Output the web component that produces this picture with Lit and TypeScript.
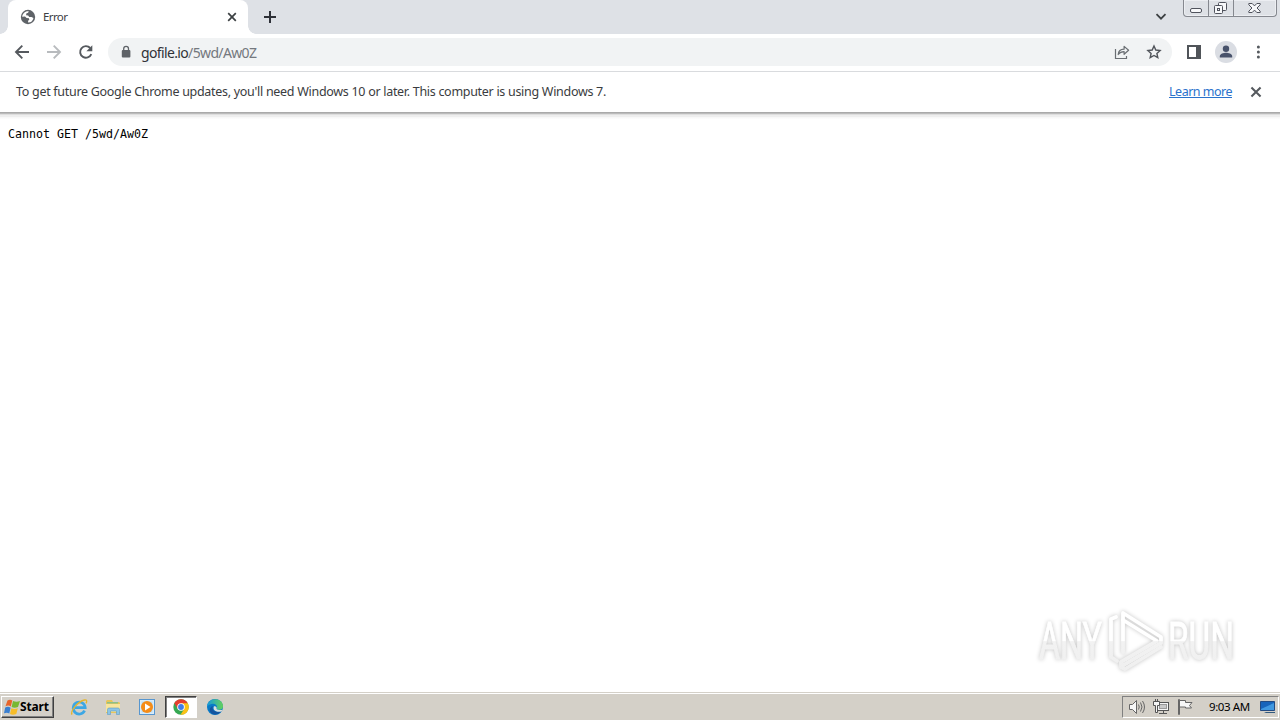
import { LitElement, html, css, svg, TemplateResult } from "lit";
import { customElement, property } from "lit/decorators.js";

const close = svg`<path d="M1.2 1.2l7.6 7.6M8.8 1.2l-7.6 7.6" fill="none" stroke="currentColor" stroke-width="1.7" />`;

@customElement("browser-tabs")
export class BrowserTabs extends LitElement {
  @property() label = "";

  static styles = css`
    :host {
      display: flex;
      height: 34px;
      background: #dee1e6;
      color: #3c4043;
      padding-left: 8px;
    }
    .tab {
      position: relative;
      display: flex;
      align-items: center;
      box-sizing: border-box;
      width: 240px;
      padding: 0 11px 0 12px;
      background: #fff;
      border-radius: 8px 8px 0 0;
    }
    .tab::before,
    .tab::after {
      content: "";
      position: absolute;
      bottom: 0;
      width: 8px;
      height: 8px;
    }
    .tab::before {
      left: -8px;
      background: radial-gradient(circle at 0 0, transparent 7.5px, #fff 8px);
    }
    .tab::after {
      right: -8px;
      background: radial-gradient(circle at 100% 0, transparent 7.5px, #fff 8px);
    }
    .title {
      flex: 1;
      margin-left: 7px;
      padding-bottom: 2px;
      font: 11.5px "Noto Sans", sans-serif;
      letter-spacing: -0.6px;
    }
    .plus {
      margin: 11px 0 0 16px;
    }
    .chevron {
      margin: 13px 16px 0 auto;
    }
    .controls {
      display: flex;
      box-sizing: border-box;
      width: 94px;
      height: 17px;
      margin-right: 3px;
      border: 1px solid #85888f;
      border-top: 0;
      border-radius: 0 0 4px 4px;
      box-shadow: inset 0 0 0 1px #eceef2;
    }
    .controls svg {
      display: block;
    }
  `;

  protected render(): TemplateResult {
    return html`
      <div class="tab">
        <svg width="16" height="16" viewBox="0 0 16 16">
          <circle cx="8" cy="8" r="7.2" fill="#5f6368" />
          <path
            d="M8.8 2.2l-.7 1.6-1.8.8-.2 1.7 2 .3 1.2 1.5 2.2-.2 1.9 1c-.1 1.8-1.5 3.7-3.3 4.4l-2 .3v-1.8l1.2-1-.4-1.6-2.3-.3-1.6-1.4-2.8.2c.1-2.3 2.3-5 5-5.4z"
            fill="#fff"
          />
        </svg>
        <span class="title">${this.label}</span>
        <svg width="10" height="10" viewBox="0 0 10 10">${close}</svg>
      </div>
      <svg class="plus" width="12" height="12" viewBox="0 0 12 12">
        <path d="M6 0v12M0 6h12" stroke="#2e3138" stroke-width="2" />
      </svg>
      <svg class="chevron" width="12" height="8" viewBox="0 0 12 8">
        <path d="M1.5 1.2L6 5.7l4.5-4.5" fill="none" stroke="#3c4043" stroke-width="1.8" />
      </svg>
      <div class="controls">
        <svg width="92" height="16" viewBox="0 0 92 16" fill="#f7f8fa" stroke="#50535d">
          <path d="M24.5 0v16M49.5 0v16" stroke="#85888f" />
          <rect x="6.5" y="8.5" width="11" height="4" rx="1.5" />
          <rect x="34.5" y="2.5" width="8" height="8" rx="1" />
          <rect x="30.5" y="5.5" width="8" height="8" rx="1" />
          <rect x="33.5" y="8.5" width="2" height="2" />
          <path d="M64.8 3.5h3.4l2.3 2.4 2.3-2.4h3.4v1.3L73 8l3.2 3.2v1.3h-3.4l-2.3-2.4-2.3 2.4h-3.4v-1.3L68 8l-3.2-3.2z" />
        </svg>
      </div>
    `;
  }
}

@customElement("browser-toolbar")
export class BrowserToolbar extends LitElement {
  @property() host = "";
  @property() path = "";

  static styles = css`
    :host {
      display: flex;
      align-items: center;
      box-sizing: border-box;
      height: 38px;
      padding: 0 14px 1px;
      background: #fff;
      border-bottom: 1px solid #d9dbde;
    }
    svg {
      flex: none;
    }
    .nav {
      display: flex;
      gap: 16px;
      width: 94px;
    }
    .omnibox {
      display: flex;
      flex: 1;
      align-items: center;
      box-sizing: border-box;
      height: 28px;
      padding: 0 10px 0 12px;
      border-radius: 14px;
      background: #f1f3f4;
    }
    .url {
      flex: 1;
      margin-left: 9px;
      padding-top: 1px;
      font: 14px "Noto Sans", sans-serif;
      letter-spacing: -0.64px;
      color: #303236;
    }
    .path {
      color: #74787e;
    }
    .share {
      margin-right: 16px;
    }
    .panel {
      margin: 0 14px 0 15px;
    }
    .menu {
      margin-left: 19px;
      margin-right: 6px;
    }
  `;

  protected render(): TemplateResult {
    return html`
      <div class="nav">
        <svg width="16" height="16" viewBox="0 0 16 16" fill="none" stroke="#55595e" stroke-width="1.9">
          <path d="M15 8H2M8.3 1.7L2 8l6.3 6.3" />
        </svg>
        <svg width="16" height="16" viewBox="0 0 16 16" fill="none" stroke="#b8bbbe" stroke-width="1.9">
          <path d="M1 8h13M7.7 1.7L14 8l-6.3 6.3" />
        </svg>
        <svg width="16" height="16" viewBox="0 0 16 16">
          <path d="M13.3 10.2A5.8 5.8 0 1 1 12.2 4" fill="none" stroke="#55595e" stroke-width="1.9" />
          <path d="M14.3 1.2v6H8.4z" fill="#55595e" />
        </svg>
      </div>
      <div class="omnibox">
        <svg width="12" height="14" viewBox="0 0 12 14">
          <rect x="1.8" y="5" width="8.6" height="7.6" rx="1" fill="#5f6368" />
          <path d="M3.7 5.5V3.8a2.400 2.400 0 0 1 4.800 0v1.700" fill="none" stroke="#5f6368" stroke-width="1.3" />
        </svg>
        <span class="url">${this.host}<span class="path">${this.path}</span></span>
        <svg class="share" width="16" height="16" viewBox="0 0 16 16" fill="none" stroke="#6a6e73" stroke-width="1.2">
          <path d="M1.5 5v9.5h11V12" />
          <path d="M4.2 10.500c.3-3.600 2.400-5.200 5.900-5.300V2.400L14.600 6.300l-4.500 4V7.600c-2.700 0-4.400.8-5.900 2.900z" stroke-linejoin="round" />
        </svg>
        <svg width="16" height="16" viewBox="0 0 16 16">
          <path d="M8 2l1.800 4 4.300.5-3.200 2.900.9 4.300L8 11.500l-3.800 2.200.9-4.300-3.200-2.900L6.200 6z" fill="none" stroke="#50545a" stroke-width="1.4" />
        </svg>
      </div>
      <svg class="panel" width="14" height="14" viewBox="0 0 14 14">
        <path d="M0 0h14v14H0zM2 2v10h7V2z" fill="#505459" fill-rule="evenodd" />
      </svg>
      <svg width="22" height="22" viewBox="0 0 22 22">
        <circle cx="11" cy="11" r="11" fill="#dadde3" />
        <circle cx="11" cy="7.8" r="3.2" fill="#48526b" />
        <path d="M4.800 16.500v-1.400c0-2.300 3.900-3.400 6.200-3.400s6.200 1.100 6.200 3.400v1.400z" fill="#48526b" />
      </svg>
      <svg class="menu" width="4" height="16" viewBox="0 0 4 16" fill="#55595e">
        <circle cx="2.400" cy="3" r="1.500" />
        <circle cx="2.400" cy="8" r="1.500" />
        <circle cx="2.400" cy="13" r="1.500" />
      </svg>
    `;
  }
}

@customElement("info-bar")
export class InfoBar extends LitElement {
  static styles = css`
    :host {
      display: flex;
      align-items: center;
      box-sizing: border-box;
      height: 40px;
      padding: 0 18px 1px 16px;
      font: 12.5px "Noto Sans", sans-serif;
      color: #3a3c40;
    }
    .message {
      flex: 1;
      letter-spacing: -0.294px;
      white-space: nowrap;
    }
    .link {
      margin-right: 18px;
      letter-spacing: -0.5px;
      color: #2a72cc;
      text-decoration: underline;
    }
    svg {
      color: #55595e;
    }
  `;

  protected render(): TemplateResult {
    return html`
      <span class="message"
        >To get future Google Chrome updates, you'll need Windows 10 or later. This computer is using Windows 7.</span
      >
      <a class="link">Learn more</a>
      <svg width="12" height="12" viewBox="0 0 10 10">${close}</svg>
    `;
  }
}

@customElement("any-run-mark")
export class AnyRunMark extends LitElement {
  static styles = css`
    :host {
      display: block;
    }
    svg {
      display: block;
      filter: drop-shadow(0 0 2px rgba(0, 0, 0, 0.24));
    }
    .word {
      font: 400 51px Roboto, sans-serif;
    }
  `;

  protected render(): TemplateResult {
    return html`
      <svg width="220" height="80" viewBox="0 0 220 80">
        <defs>
          <linearGradient id="fade" x1="0" y1="0" x2="0" y2="80" gradientUnits="userSpaceOnUse">
            <stop offset="0.51" stop-color="#fff" />
            <stop offset="0.52" stop-color="#f2f2f2" />
            <stop offset="0.9" stop-color="#efefef" />
          </linearGradient>
        </defs>
        <g fill="url(#fade)" stroke="url(#fade)" stroke-width="0.8">
          <text class="word" x="9" y="59" textLength="63" lengthAdjust="spacingAndGlyphs">ANY</text>
          <text class="word" x="138" y="59" textLength="66" lengthAdjust="spacingAndGlyphs">RUN</text>
        </g>
        <g fill="none" stroke="url(#fade)" stroke-width="3.8" stroke-linejoin="round" stroke-linecap="round">
          <path d="M86 17l-5 2v38l6 4" />
          <path d="M93 52V13l38 24v6L92 66" />
          <path d="M93 20l34 21-36 21v5l4 2 36-22" />
        </g>
      </svg>
    `;
  }
}

@customElement("task-bar")
export class TaskBar extends LitElement {
  @property() time = "";

  static styles = css`
    :host {
      display: flex;
      align-items: flex-start;
      box-sizing: border-box;
      height: 28px;
      padding: 3px 1px 0;
      background: #d4d0c8;
      border-top: 1px solid #d4d0c8;
      box-shadow: inset 0 1px #fff;
    }
    svg {
      display: block;
      flex: none;
    }
    .start {
      display: flex;
      align-items: center;
      box-sizing: border-box;
      width: 53px;
      height: 22px;
      padding: 0 0 1px 2px;
      border: 1px solid;
      border-color: #fff #404040 #404040 #fff;
      box-shadow: inset -1px -1px #808080;
      font: bold 12px "Noto Sans", sans-serif;
      letter-spacing: -0.15px;
      color: #000;
    }
    .launch {
      display: flex;
      margin-left: 9px;
    }
    .item {
      display: flex;
      align-items: center;
      justify-content: center;
      box-sizing: border-box;
      width: 32px;
      height: 22px;
      margin-right: 2px;
      border: 1px solid transparent;
    }
    .active {
      background: #fff;
      border-color: #404040 #fff #fff #404040;
      box-shadow: inset 1px 1px #808080;
    }
    .tray {
      display: flex;
      align-items: center;
      box-sizing: border-box;
      width: 157px;
      height: 22px;
      margin-left: auto;
      padding: 0 2px 0 5px;
      border: 1px solid;
      border-color: #808080 #fff #fff #808080;
      gap: 8px;
    }
    .clock {
      flex: 1;
      margin-left: 8px;
      padding-bottom: 1px;
      font: 11.5px "Noto Sans", sans-serif;
      letter-spacing: -0.4px;
      white-space: nowrap;
      color: #000;
    }
  `;

  protected render(): TemplateResult {
    return html`
      <div class="start">
        <svg width="16" height="16" viewBox="0 0 16 16">
          <path d="M3.500 1.500Q6 0 8.300 1.500L6.800 7.500Q4.500 5.800 1.500 7.300z" fill="#e8642a" />
          <path d="M9 2q3.500 1.500 7 0L14 8q-3.500 1.500-6.400 0z" fill="#78b832" />
          <path d="M1.200 8.500q3-1.500 5.400.2L5.300 14.500Q3 13 0 14.300z" fill="#3a7fd0" />
          <path d="M7.400 9.200q3 1.300 6.400.1L12.300 15q-3.500 1.500-6.300 0z" fill="#f7bd28" />
        </svg>
        <span>Start</span>
      </div>
      <div class="launch">
        <span class="item">
          <svg width="18" height="18" viewBox="0 0 18 18" fill="none">
            <path d="M14.600 12.700A6 6 0 1 1 15.200 9.600H5" stroke="#3da7e4" stroke-width="2.700" />
            <path d="M2.200 16.500C-.8 14 8 3.400 14.500 2c3-.5 2.300 2 1.500 3.300" stroke="#e5b52c" stroke-width="1.300" />
          </svg>
        </span>
        <span class="item">
          <svg width="18" height="18" viewBox="0 0 18 18">
            <path d="M2 3l1-1h5l1 2h6l1 1v10H2z" fill="#e7c65a" />
            <path d="M3 4h11v1.500H3z" fill="#8cc08a" />
            <path d="M2 6h14v8H2z" fill="#f8e59c" />
            <path d="M3.500 16.500v-5q0-1.500 1.500-1.500h9q1.500 0 1.500 1.500v5h-3v-3.500h-6v3.500z" fill="#8cc4e6" stroke="#5c9cc4" stroke-width=".6" />
          </svg>
        </span>
        <span class="item">
          <svg width="18" height="18" viewBox="0 0 18 18">
            <rect x="1.500" y="1.500" width="15" height="15" fill="#d8ecfa" stroke="#5796cf" />
            <rect x="3.500" y="3.500" width="11" height="11" fill="#b5dbf5" />
            <circle cx="9" cy="9" r="6" fill="#f58c18" />
            <path d="M7 5.500v7L12.500 9z" fill="#fff" />
          </svg>
        </span>
        <span class="item active">
          <svg width="16" height="16" viewBox="0 0 16 16">
            <circle cx="8" cy="8" r="7.700" fill="#35a852" />
            <path d="M8 8L1.300 4.100A7.700 7.700 0 0 1 14.700 4.100z" fill="#e43e2f" />
            <path d="M8 4.300h6.800A7.700 7.700 0 0 1 7.500 15.700L11.200 9.900z" fill="#fbc116" />
            <path d="M1.300 4.100L4.800 9.900 8 8 8 4z" fill="#e43e2f" />
            <circle cx="8" cy="8" r="3.800" fill="#fff" />
            <circle cx="8" cy="8" r="2.900" fill="#3f7de8" />
          </svg>
        </span>
        <span class="item">
          <svg width="18" height="18" viewBox="0 0 18 18">
            <defs>
              <linearGradient id="edge">
                <stop offset="0" stop-color="#1599dc" />
                <stop offset="1" stop-color="#65d25a" />
              </linearGradient>
            </defs>
            <circle cx="9" cy="9" r="8" fill="#087ac7" />
            <path d="M1 8.500C2-1.500 16.800-.8 17 8.200c0 3.700-4.500 4.400-6.500 2.900C13 6 6 3.500 1 8.500z" fill="url(#edge)" />
            <path d="M7 8c-2 4 2.500 7.300 8.500 5C11 19.500 2 16 4 10.500Q5 8 7 8z" fill="#15549f" />
            <path d="M8 8.200q3.300-.4 2.500 2.900 2 1.500 6 .6l-1 1.800C9 14.500 6.500 11.500 8 8.200z" fill="#d9dfdf" />
          </svg>
        </span>
      </div>
      <div class="tray">
        <svg width="17" height="16" viewBox="0 0 17 16" fill="none" stroke="#666">
          <path d="M1.500 5.500h3l4-4v13l-4-4h-3z" fill="#f7f7f7" />
          <path d="M10.500 5.500q1.500 2.500 0 5M12.500 3.500q3 4.500 0 9M14.500 2q4 6 0 12" />
        </svg>
        <svg width="16" height="16" viewBox="0 0 16 16" fill="#f5f5f5" stroke="#555">
          <rect x="4.500" y="3.500" width="11" height="8" />
          <rect x="6.500" y="5.500" width="7" height="4" fill="#c9c9c9" stroke="#999" />
          <path d="M6 14.500h8M10.500 12v2" />
          <path d="M.5 2.500h6v4h-2v7h-2v-7h-2zM2.500 0v2M4.500 0v2" />
        </svg>
        <svg width="16" height="16" viewBox="0 0 16 16" fill="#f7f7f7" stroke="#666">
          <path d="M1.500.5h1v15h-1z" fill="#fff" />
          <path d="M2.500 1.500h6v2h6.500l-2.500 3 2 2.500h-6v-1h-6z" />
        </svg>
        <span class="clock">${this.time}</span>
        <svg width="17" height="16" viewBox="0 0 17 16">
          <path d="M1.500 2.500h14v9h-14z" fill="#1764bb" stroke="#234b82" />
          <path d="M2 10L15 4v7H2z" fill="#4098e0" />
          <path d="M5 14h11v-1H7z" fill="#33597d" />
        </svg>
      </div>
    `;
  }
}

@customElement("app-root")
export class AppRoot extends LitElement {
  static styles = css`
    :host {
      display: flex;
      flex-direction: column;
      position: relative;
      width: 1280px;
      height: 720px;
      overflow: hidden;
      background: #fff;
    }
    .page {
      flex: 1;
      padding: 15px 8px;
      background: linear-gradient(#aaa 0 1px, #bbb 1px 2px, #dedede 2px 3px, #eee 3px 5px, #f8f8f8 5px 6px, #fff 7px);
    }
    .body {
      margin: 0;
      font: 11.63px/14px "DejaVu Sans Mono", monospace;
      color: #000;
    }
    .mark {
      position: absolute;
      right: 30px;
      bottom: 40px;
    }
  `;

  protected render(): TemplateResult {
    return html`
      <browser-tabs label="Error"></browser-tabs>
      <browser-toolbar host="gofile.io" path="/5wd/Aw0Z"></browser-toolbar>
      <info-bar></info-bar>
      <div class="page"><pre class="body">Cannot GET /5wd/Aw0Z</pre></div>
      <any-run-mark class="mark"></any-run-mark>
      <task-bar time="9:03 AM"></task-bar>
    `;
  }
}

declare global {
  interface HTMLElementTagNameMap {
    "app-root": AppRoot;
  }
}
